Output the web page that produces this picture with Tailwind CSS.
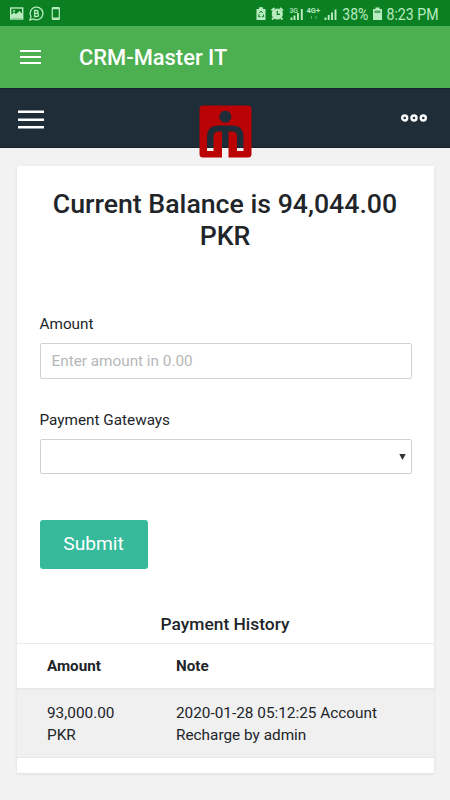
<!DOCTYPE html>
<html lang="en">
<head>
<meta charset="utf-8">
<meta name="viewport" content="width=device-width, initial-scale=1">
<title>CRM-Master IT</title>
<script src="https://cdn.jsdelivr.net/npm/@tailwindcss/browser@4"></script>
</head>
<body class="h-[800px] w-[450px] overflow-hidden bg-[#f2f2f2] font-['Roboto','Liberation_Sans',sans-serif] text-[#212529]">
  <div class="flex h-[26px] items-center bg-[#0a8023] text-[#b9ebc0]">
    <svg class="h-[26px] w-[342px] shrink-0" viewBox="0 0 342 26" fill="none" stroke="currentColor">
      <!-- picture -->
      <rect x="10.7" y="8" width="12" height="11" stroke-width="1.4"/>
      <path d="M11 18v-3l3-2.500 2 1.500 3.500-3 3 3V18z" fill="currentColor" stroke="none"/>
      <circle cx="14" cy="11" r="1" fill="currentColor" stroke="none"/>
      <!-- business chat -->
      <path d="M30 20l1-3.300a6.400 6.400 0 1 1 2.300 2.300z" stroke-width="1.3"/>
      <path d="M34.700 10.500v6h2.200a1.600 1.600 0 0 0 0-3.200h-2.200h2a1.400 1.400 0 0 0 0-2.800z" stroke-width="1.300"/>
      <!-- phone -->
      <rect x="52.300" y="7.500" width="7" height="12" rx="1" stroke-width="1.200"/>
      <path d="M52 8.300h7.600M52 18.300h7.600" stroke-width="1.800"/>
      <!-- battery saver -->
      <path d="M256.500 9h2.500V7.300h4V9h2.500v11h-9z" fill="currentColor" stroke="none"/>
      <path d="M259.300 13l1.700-2 1.700 2M263.300 14.500l.5 2.200h-2M260.500 16.700h-2l.7-2.500" stroke="#0a8023" stroke-width="1"/>
      <!-- alarm -->
      <circle cx="277.300" cy="14" r="5.600" fill="currentColor" stroke="none"/>
      <path d="M271.500 10.500l3-2.500M283 10.500L280 8M273.500 18l-1.500 1.500M281 18l1.500 1.500" stroke-width="1.800"/>
      <path d="M277.300 10.800v3.600h2.700" stroke="#0a8023" stroke-width="1.200"/>
      <!-- signal bars -->
      <path d="M291.500 20v-2.500M294.500 20v-4.500M298 20v-7M301.800 20V9" stroke-width="1.900"/>
      <path d="M325.500 20v-2.500M328.700 20v-5M332 20v-7.500M335.500 20V9.500" stroke-width="1.900"/>
      <path d="M311.500 19v-3M316 16v3" stroke-width="1" opacity=".5"/>
      <text x="289.500" y="13" font-size="7.500" font-weight="500" fill="currentColor" stroke="none" textLength="8.500" lengthAdjust="spacingAndGlyphs">3G</text>
      <text x="306.500" y="13" font-size="7.500" font-weight="700" fill="currentColor" stroke="none" textLength="13.500" lengthAdjust="spacingAndGlyphs">4G+</text>
    </svg>
    <svg class="h-[26px] w-[108px] shrink-0" viewBox="342 0 108 26" fill="currentColor">
      <text x="342.300" y="20" font-size="17" textLength="26" lengthAdjust="spacingAndGlyphs">38%</text>
      <path d="M373 9h2.500V7.500h4V9h2.500v11h-9z"/>
      <path d="M374.500 10.500h6v2.500h-6z" fill="#0a8023" opacity=".6"/>
      <text x="386.500" y="20" font-size="17" textLength="52" lengthAdjust="spacingAndGlyphs">8:23 PM</text>
    </svg>
  </div>
  <header class="flex h-[61.500px] items-center bg-[#4caf50] pl-5 text-white">
    <svg class="h-[16px] w-[21px]" viewBox="0 0 21 16"><path d="M0 2h21M0 8h21M0 14h21" stroke="currentColor" stroke-width="2"/></svg>
    <h1 class="ml-[38px] pt-[3px] text-[21.900px] font-medium">CRM-Master IT</h1>
  </header>
  <nav class="relative flex h-[60.500px] items-center justify-between border-y border-[#13222b] bg-[#1f2d38] px-[18px]">
    <svg class="mt-[4px] h-[20px] w-[26px]" viewBox="0 0 26 20"><path d="M0 1.700h26M0 9.700h26M0 17.200h26" stroke="#fff" stroke-width="2.600"/></svg>
    <svg class="mr-[5px] mt-[1px] h-[8px] w-[26px]" viewBox="0 0 26 8" fill="none" stroke="#fff" stroke-width="2.400"><circle cx="3.700" cy="4" r="2.500"/><circle cx="13" cy="4" r="2.500"/><circle cx="22.300" cy="4" r="2.500"/></svg>
    <svg class="absolute left-[199px] top-[16px] h-[53px] w-[53px]" viewBox="0 0 53 53">
      <path fill="#b90304" fill-rule="evenodd" d="M4 .5h45a3.500 3.500 0 0 1 3.500 3.500v45a3.500 3.500 0 0 1-3.500 3.500H29.500V26.500H33q5 0 5 5V46h6.500V32q0-11.500-11.500-11.500h-13.500q-11.500 0-11.500 11.500v14H14.500V31.500q0-5 5-5H23v26H4A3.500 3.500 0 0 1 .5 49V4A3.500 3.500 0 0 1 4 .5zM26.300 5.800a6 6 0 1 0 .01 0z"/>
    </svg>
  </nav>
  <main class="mx-[16.500px] mt-[17.500px] h-[607.500px] bg-white shadow-[0_1px_3px_rgba(0,0,0,0.09)]">
    <div class="h-[439px] px-[23px] pt-[22px]">
      <h2 class="text-center text-[26.700px] font-medium leading-[32px]">Current Balance is 94,044.00 PKR</h2>
      <label class="mt-[61px] block text-[15.300px] leading-[22px]">Amount</label>
      <input class="mt-[8px] block h-[36px] w-[372px] rounded-[2px] border border-[#cfd2d2] px-[11px] text-[15.300px] outline-none placeholder:text-[#b5b7b9]" placeholder="Enter amount in 0.00">
      <label class="mt-[30px] block text-[15.300px] leading-[22px]">Payment Gateways</label>
      <div class="mt-[8.500px] flex h-[35px] w-[372px] items-center justify-end rounded-[2px] border border-[#cfd2d2] pr-[5px]">
        <svg class="h-[6px] w-[7px]" viewBox="0 0 7 6"><path d="M.3 0h6.400L3.500 6z" fill="#333"/></svg>
      </div>
      <button class="mt-[45.500px] block h-[49px] w-[108px] rounded-[3px] bg-[#36ba9b] text-[19.200px] text-white">Submit</button>
    </div>
    <h3 class="mt-[8px] h-[30.500px] text-center text-[17.400px] font-medium leading-[23px]">Payment History</h3>
    <div class="grid h-[45px] grid-cols-[129px_1fr] items-center border-t border-[#e8eaec] pl-[30.500px] text-[15.200px] font-bold"><span>Amount</span><span>Note</span></div>
    <div class="grid h-[70px] grid-cols-[129px_1fr] border-b border-t-2 border-[#e5e9ec] bg-[#f0f0f1] pl-[30.500px] pt-[11.500px] text-[15.350px] leading-[22px]"><span>93,000.00<br>PKR</span><span>2020-01-28 05:12:25 Account<br>Recharge by admin</span></div>
  </main>
</body>
</html>
